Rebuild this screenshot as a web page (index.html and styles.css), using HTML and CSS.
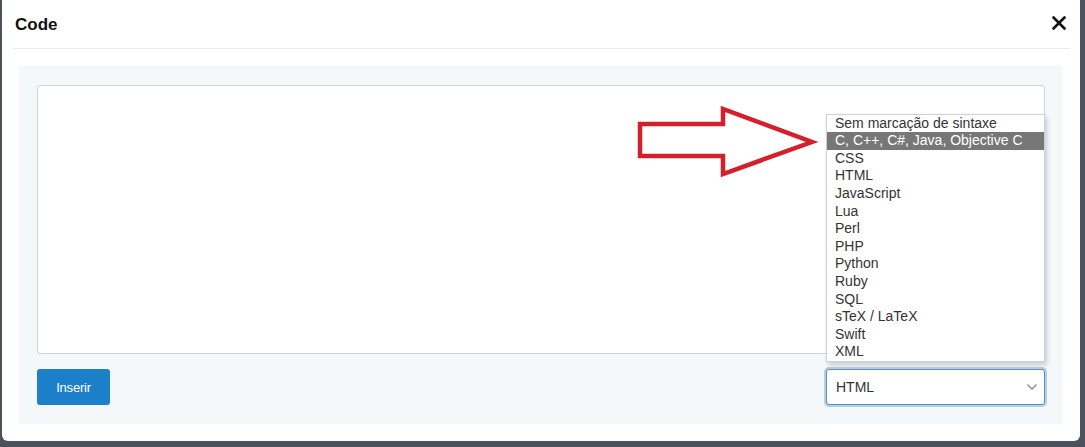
FILE: index.html
```html
<!DOCTYPE html>
<html lang="pt">
<head>
    <meta charset="UTF-8">
    <meta name="viewport" content="width=device-width, initial-scale=1.0">
    <title>Code</title>
    <link rel="stylesheet" href="styles.css">
</head>
<body>
    <div class="modal">
        <div class="modal-header">
            <h2>Code</h2>
            <button class="close" aria-label="Fechar">
                <svg width="14" height="14" viewBox="0 0 14 14"><path d="M1.5 1.5 L12.5 12.5 M12.5 1.5 L1.5 12.5" stroke="#111" stroke-width="2.6" stroke-linecap="round"/></svg>
            </button>
        </div>
        <div class="modal-body">
            <textarea class="code-input"></textarea>
            <div class="footer">
                <button class="insert">Inserir</button>
                <div class="select-wrap">
                    <div class="select">
                        <span>HTML</span>
                        <svg width="12" height="8" viewBox="0 0 12 8"><path d="M1.5 1.5 L6 6 L10.5 1.5" fill="none" stroke="#999" stroke-width="1.6"/></svg>
                    </div>
                    <ul class="options">
                        <li>Sem marcação de sintaxe</li>
                        <li class="active">C, C++, C#, Java, Objective C</li>
                        <li>CSS</li>
                        <li>HTML</li>
                        <li>JavaScript</li>
                        <li>Lua</li>
                        <li>Perl</li>
                        <li>PHP</li>
                        <li>Python</li>
                        <li>Ruby</li>
                        <li>SQL</li>
                        <li>sTeX / LaTeX</li>
                        <li>Swift</li>
                        <li>XML</li>
                    </ul>
                </div>
            </div>
            <svg class="arrow" width="190" height="80" viewBox="0 0 190 80">
                <path d="M5 18 L88 18 L88 3 L177 36 L88 68 L88 50 L5 50 Z" fill="none" stroke="#d4202c" stroke-width="4.5" stroke-linejoin="miter"/>
            </svg>
        </div>
    </div>
</body>
</html>
```

FILE: styles.css
```css
html, body {
    margin: 0;
    padding: 0;
    height: 100%;
    overflow: hidden;
}

body {
    background-color: #4b525c;
    font-family: "Liberation Sans", Arial, sans-serif;
    padding: 0 5px 6px 2px;
    box-sizing: border-box;
}

.modal {
    background-color: white;
    border-radius: 0 0 6px 6px;
    height: 441px;
    padding: 0 18px 17px 17px;
    box-sizing: border-box;
    display: flex;
    flex-direction: column;
}

.modal-header {
    display: flex;
    align-items: center;
    justify-content: space-between;
    height: 48px;
    margin: 0 -8px 0 -6px;
    padding: 0 4px 0 2px;
    border-bottom: 1px solid #e8ebee;
}

.modal-header h2 {
    margin: 0;
    font-size: 17px;
    font-weight: bold;
    color: #111;
    padding-top: 2px;
}

.close {
    background: none;
    border: none;
    padding: 0;
    cursor: pointer;
    display: flex;
    margin-top: -2px;
}

.modal-body {
    position: relative;
    margin-top: 17px;
    background-color: #f5f8fb;
    flex: 1;
    padding: 19px 17px 19px 18px;
    display: flex;
    flex-direction: column;
    gap: 15px;
}

.code-input {
    height: 269px;
    border: 1px solid #cfd2d6;
    border-radius: 3px;
    background-color: white;
    resize: none;
    box-sizing: border-box;
}

.footer {
    display: flex;
    justify-content: space-between;
    align-items: center;
}

.insert {
    width: 73px;
    height: 36px;
    background-color: #1b7fc9;
    color: white;
    border: none;
    border-radius: 3px;
    font-family: "Liberation Sans", Arial, sans-serif;
    font-size: 13px;
    letter-spacing: -0.2px;
    cursor: pointer;
}

.select-wrap {
    position: relative;
    width: 219px;
}

.select {
    height: 36px;
    box-sizing: border-box;
    border: 1px solid #5b8fb5;
    border-radius: 3px;
    box-shadow: 0 0 0 2px #b7cfe2;
    background-color: white;
    display: flex;
    align-items: center;
    justify-content: space-between;
    padding: 0 6px 0 9px;
    font-size: 14px;
    color: #333;
}

.options {
    position: absolute;
    left: 0;
    right: 0;
    bottom: 43px;
    margin: 0;
    padding: 0;
    list-style: none;
    background-color: white;
    border: 1px solid #d0d0d0;
    box-shadow: 2px 3px 5px rgba(0, 0, 0, 0.18);
}

.options li {
    height: 17.6px;
    line-height: 17.6px;
    padding-left: 8px;
    font-size: 14px;
    color: #333;
    white-space: nowrap;
}

.options li.active {
    background-color: #777;
    color: white;
}

.arrow {
    position: absolute;
    left: 616px;
    top: 40px;
}
```
